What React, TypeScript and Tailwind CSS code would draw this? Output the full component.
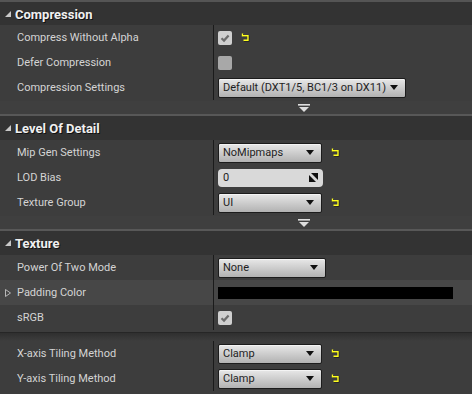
import React from "react";

const font = { fontFamily: "Roboto, 'Noto Sans', sans-serif" };

function HeaderArrow() {
  return (
    <svg width="6" height="6" viewBox="0 0 6 6" className="shrink-0">
      <polygon points="6,0 6,6 0,6" fill="#c8c8c8" />
    </svg>
  );
}

function Header({ title, h }: { title: string; h: string }) {
  return (
    <div className={h + " bg-[#333333] flex items-center pl-[5px]"}>
      <HeaderArrow />
      <span
        className="ml-[4px] text-[13px] font-bold text-[#f0f0f0] leading-none pt-[1px]"
        style={{ textShadow: "1px 1px 0 #111" }}
      >
        {title}
      </span>
    </div>
  );
}

function Reset() {
  return (
    <svg width="9" height="9" viewBox="0 0 9 9" className="ml-[9px]">
      <path d="M1.5 0.5 V2.7 H7 V7.2 H2.5" fill="none" stroke="#111" strokeWidth="1.4" transform="translate(0.6,0.6)" />
      <path d="M1.5 0.5 V2.7 H7 V7.2 H2.5" fill="none" stroke="#ffff20" strokeWidth="1.4" />
    </svg>
  );
}

function Check({ checked }: { checked: boolean }) {
  return (
    <div
      className={
        "w-[14px] h-[14px] rounded-[2px] flex items-center justify-center " +
        (checked ? "bg-[#cfcfcf]" : "bg-[#a8a8a8]")
      }
    >
      {checked && (
        <svg width="10" height="10" viewBox="0 0 10 10">
          <path d="M1.5 5.2 L4 7.6 L8.6 2.4" fill="none" stroke="#6c6c6c" strokeWidth="2.2" />
        </svg>
      )}
    </div>
  );
}

function Combo({ text, w }: { text: string; w: string }) {
  return (
    <div
      className={
        w +
        " h-[20px] rounded-[2px] border border-[#1c1c1c] bg-gradient-to-b from-[#e8e8e8] to-[#b2b2b2] flex items-center pl-[4px] pr-[7px] text-[11px] text-[#1e1e1e] shadow-[inset_0_1px_0_#f4f4f4]"
      }
    >
      <span className="flex-1 whitespace-nowrap overflow-hidden pt-[1px]">{text}</span>
      <svg width="8" height="5" viewBox="0 0 8 5" className="shrink-0">
        <polygon points="0,0 8,0 4,5" fill="#111" />
      </svg>
    </div>
  );
}

function Row({
  label,
  children,
  light,
  expander,
}: {
  label: string;
  children?: React.ReactNode;
  light?: boolean;
  expander?: boolean;
}) {
  return (
    <div className={"h-[25px] flex " + (light ? "bg-[#474747]" : "")}>
      <div className="w-[214px] border-r border-[#1b1b1b] flex items-center relative">
        {expander && (
          <svg width="6" height="8" viewBox="0 0 6 8" className="absolute left-[5px] top-[9px]">
            <polygon points="0.5,0.5 5.5,4 0.5,7.5" fill="none" stroke="#b8b8b8" strokeWidth="1" />
          </svg>
        )}
        <span className="pl-[17px] pt-[2px] text-[11px] text-[#d4d4d4] whitespace-nowrap">{label}</span>
      </div>
      <div className="flex-1 flex items-center pl-[4px]">{children}</div>
    </div>
  );
}

function Strip() {
  return (
    <>
      <div className="h-[13px] bg-[#3f3f3f] flex items-center">
        <svg width="12" height="8" viewBox="0 0 12 8" className="ml-[298px]">
          <rect x="0" y="0" width="12" height="1.6" fill="#dedede" />
          <polygon points="1,3 11,3 6,8" fill="#dedede" />
        </svg>
      </div>
      <div className="h-[2px] bg-[#585858]" />
    </>
  );
}

function SpinIcon() {
  return (
    <svg width="9" height="9" viewBox="0 0 9 9">
      <polygon points="2,0 9,0 9,7" fill="#111" />
      <polygon points="0,2 0,9 7,9" fill="#111" />
    </svg>
  );
}

export default function App() {
  return (
    <div className="w-[472px] h-[394px] overflow-hidden bg-[#3d3d3d]" style={font}>
      <div className="h-[2px] bg-[#555555]" />
      <Header title="Compression" h="h-[23px]" />
      <div className="bg-[#3d3d3d] pb-[1px]">
        <Row label="Compress Without Alpha">
          <Check checked />
          <Reset />
        </Row>
        <Row label="Defer Compression">
          <Check checked={false} />
        </Row>
        <Row label="Compression Settings">
          <Combo text="Default (DXT1/5, BC1/3 on DX11)" w="w-[188px]" />
        </Row>
      </div>
      <Strip />
      <Header title="Level Of Detail" h="h-[24px]" />
      <div className="bg-[#3d3d3d] pb-[1px]">
        <Row label="Mip Gen Settings">
          <Combo text="NoMipmaps" w="w-[104px]" />
          <Reset />
        </Row>
        <Row label="LOD Bias">
          <div className="w-[105px] h-[18px] rounded-[4px] bg-[#d9d9d9] flex items-center pl-[5px] pr-[5px] text-[11px] text-[#1e1e1e]">
            <span className="flex-1 pt-[1px]">0</span>
            <SpinIcon />
          </div>
        </Row>
        <Row label="Texture Group">
          <Combo text="UI" w="w-[104px]" />
          <Reset />
        </Row>
      </div>
      <Strip />
      <Header title="Texture" h="h-[24px]" />
      <div className="bg-[#3d3d3d] pb-[2px]">
        <Row label="Power Of Two Mode">
          <Combo text="None" w="w-[108px]" />
        </Row>
        <Row label="Padding Color" light expander>
          <div className="w-[235px] h-[12px] bg-black" />
        </Row>
        <Row label="sRGB">
          <Check checked />
        </Row>
      </div>
      <div className="h-[1px] bg-[#262626]" />
      <div className="h-[8px] bg-gradient-to-b from-[#2f2f2f] to-[#3d3d3d]" />
      <div className="bg-[#3d3d3d]">
        <Row label="X-axis Tiling Method">
          <Combo text="Clamp" w="w-[104px]" />
          <Reset />
        </Row>
        <Row label="Y-axis Tiling Method">
          <Combo text="Clamp" w="w-[104px]" />
          <Reset />
        </Row>
      </div>
    </div>
  );
}
